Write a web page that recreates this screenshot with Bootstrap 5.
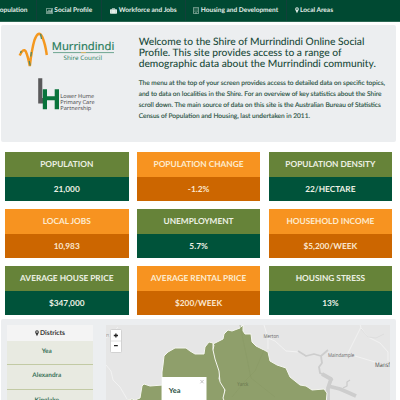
<!DOCTYPE html>
<html lang="en">
<head>
<meta charset="utf-8">
<meta name="viewport" content="width=device-width, initial-scale=1">
<title>Murrindindi Online Social Profile</title>
<link href="https://cdn.jsdelivr.net/npm/bootstrap@5.3.0/dist/css/bootstrap.min.css" rel="stylesheet">
<style>
html, body { width: 400px; height: 400px; overflow: hidden; }
body { font-family: Lato, sans-serif; background: #fff; color: #1f4e3d; font-size: 7px; line-height: 1.2; text-rendering: geometricPrecision; }
.topbar { height: 21.5px; background: #004932; border-bottom: 1px solid #2b6753; color: #e4eee9; font-weight: 700; font-size: 6.55px; white-space: nowrap; }
.topbar .cell { height: 21px; border-right: 1px solid #123f3a; gap: 1.5px; color: inherit; text-decoration: none; flex: none; }
.topbar .cell:last-child { border: 0; }
.panel { background: #eceef0; border-radius: 2px; margin-left: 1px; width: 395px; }
.intro { height: 117px; margin-top: 3.5px; }
.logos { width: 137.7px; flex: none; }
.headline { font-size: 10.22px; line-height: 11.15px; margin: 12.1px 0 0; color: #1a4b3a; font-weight: 500; white-space: nowrap; }
.copy { font-size: 6.55px; line-height: 11.1px; margin: 7px 0 0; white-space: nowrap; -webkit-text-stroke: .12px #1f4e3d; }
.tiles { display: grid; grid-template-columns: repeat(3, 123.5px); column-gap: 8.3px; row-gap: 8px; margin: 10px 0 0 5px; }
.tile { height: 49px; font-size: 8.3px; font-weight: 700; color: #edf1e4; text-align: center; line-height: 24.5px; white-space: nowrap; }
.tile div { height: 24.5px; }
.tile.leaf .top { background: #668339; }
.tile.leaf .val { background: #00533a; }
.tile.sun .top { background: #f79320; color: #fdebcf; }
.tile.sun .val { background: #cc6600; color: #fbe6cf; }
.districts { height: 90px; margin-top: 4px; padding: 6px 0 0 6px; }
.side { width: 86px; margin-right: 13px; font-weight: 700; flex: none; }
.side .head { height: 16px; background: #f4f4f4; color: #333; font-size: 6.7px; gap: 1px; }
.side .place { display: block; height: 24.3px; line-height: 22px; background: #e8eae1; border-bottom: 1.3px solid #c2caa4; text-align: center; padding-right: 6.5px; color: #397158; text-decoration: none; font-size: 6.4px; }
svg { display: block; flex: none; }
</style>
<script src="https://cdn.jsdelivr.net/npm/bootstrap@5.3.0/dist/js/bootstrap.bundle.min.js"></script>
</head>
<body>
<nav class="topbar d-flex overflow-hidden">
  <a class="cell d-flex align-items-center justify-content-end" style="width:37px;padding-right:8.5px">Population</a>
  <a class="cell d-flex align-items-center justify-content-center" style="width:65px">
    <svg width="7" height="6" viewBox="0 0 7 6"><path d="M.4.4H6.6V5.6H.4Z" fill="none" stroke="#c5d8cf" stroke-width=".6"/><path d="M1.8 4.8V3.2M3 4.8V1.8M4.2 4.8V2.6M5.4 4.8V1.3" stroke="#e4eee9" stroke-width=".8"/></svg>Social Profile</a>
  <a class="cell d-flex align-items-center justify-content-center" style="width:84px">
    <svg width="7" height="6" viewBox="0 0 7 6"><rect y="1.2" width="7" height="4.6" rx=".7" fill="#e4eee9"/><path d="M2.4 1.4V.4H4.6V1.4" fill="none" stroke="#e4eee9" stroke-width=".7"/><path d="M1.3 1.2V5.8M5.7 1.2V5.8" stroke="#8fb0a2" stroke-width=".3"/></svg>Workforce and Jobs</a>
  <a class="cell d-flex align-items-center justify-content-center" style="width:100.5px">
    <svg width="6" height="7" viewBox="0 0 6 7"><path d="M.5.4H5.5V6.6H.5Z" fill="none" stroke="#b9d0c5" stroke-width=".6"/><path d="M1.5 1.8H4.6M1.5 3.2H4.6M1.5 4.6H4.6" stroke="#b9d0c5" stroke-width=".7" stroke-dasharray=".7 .5"/><path d="M2.5 5.2H3.5V6.6H2.5Z" fill="#b9d0c5"/></svg>Housing and Development</a>
  <a class="cell d-flex align-items-center" style="padding-left:8px">
    <svg width="4" height="7" viewBox="0 0 4 7"><path fill-rule="evenodd" d="M2 .3A1.8 1.8 0 0 1 3.8 2.1C3.8 3.4 2.8 4.4 2 6.2C1.2 4.4.2 3.4.2 2.1A1.8 1.8 0 0 1 2 .3M2 1.3A.8.8 0 1 0 2 2.9A.8.8 0 1 0 2 1.3" fill="#e4eee9"/></svg>Local Areas</a>
</nav>

<section class="panel intro d-flex">
  <div class="logos">
    <svg width="130" height="94" viewBox="1 25 130 94">
      <path d="M19.7 55.5Q23.3 47.5 25.8 51.5Q28 56.5 29.8 66Q31.8 49 34.5 40Q38.5 29.5 42.3 37Q45.3 44 46.8 55" fill="none" stroke="#f4981f" stroke-width="2.5"/>
      <path d="M31.4 52L30.8 56.5M40.6 33.8L41.5 39M21.3 51L20.5 53M29.2 61L30.2 65.5" stroke="#4f8a67" stroke-width="1.3" fill="none"/>
      <g font-family="Open Sans, sans-serif" fill="#257a59">
        <text x="51.8" y="49.6" font-size="10.8" stroke="#257a59" stroke-width=".2" textLength="62.5" lengthAdjust="spacingAndGlyphs">Murrindindi</text>
        <text x="63.5" y="59.8" font-size="6.1" textLength="38.5" lengthAdjust="spacingAndGlyphs">Shire Council</text>
      </g>
      <path d="M53 52.6H114" stroke="#4c9277" stroke-width=".8"/><path d="M81 52.6H86" stroke="#e6b760" stroke-width=".9"/>
      <path d="M38.2 78.3H42.3V98H45V102.3L42.8 103.4H38.2Z" fill="#59595b"/>
      <path d="M42.8 89.3H47V96.3H54.7V89.3H59V109.3H54.7V100.3H47V109.3H42.8Z" fill="#08733b"/>
      <g font-family="Open Sans, sans-serif" fill="#444" font-size="5.5">
        <text x="60.3" y="98.4" textLength="34" lengthAdjust="spacingAndGlyphs">Lower Hume</text>
        <text x="60.3" y="104.3" textLength="34.5" lengthAdjust="spacingAndGlyphs">Primary Care</text>
        <text x="60.3" y="110.2" textLength="31" lengthAdjust="spacingAndGlyphs">Partnership</text>
      </g>
    </svg>
  </div>
  <div>
    <h1 class="headline">Welcome to the Shire of Murrindindi Online Social<br>Profile. This site provides access to a range of<br>demographic data about the Murrindindi community.</h1>
    <p class="copy">The menu at the top of your screen provides access to detailed data on specific topics,<br>and to data on localities in the Shire. For an overview of key statistics about the Shire<br>scroll down. The main source of data on this site is the Australian Bureau of Statistics<br>Census of Population and Housing, last undertaken in 2011.</p>
  </div>
</section>

<section class="tiles">
  <div class="tile leaf"><div class="top">POPULATION</div><div class="val">21,000</div></div>
  <div class="tile sun"><div class="top">POPULATION CHANGE</div><div class="val">-1.2%</div></div>
  <div class="tile leaf"><div class="top">POPULATION DENSITY</div><div class="val">22/HECTARE</div></div>
  <div class="tile sun"><div class="top">LOCAL JOBS</div><div class="val">10,983</div></div>
  <div class="tile leaf"><div class="top">UNEMPLOYMENT</div><div class="val">5.7%</div></div>
  <div class="tile sun"><div class="top">HOUSEHOLD INCOME</div><div class="val">$5,200/WEEK</div></div>
  <div class="tile leaf"><div class="top">AVERAGE HOUSE PRICE</div><div class="val">$347,000</div></div>
  <div class="tile sun"><div class="top">AVERAGE RENTAL PRICE</div><div class="val">$200/WEEK</div></div>
  <div class="tile leaf"><div class="top">HOUSING STRESS</div><div class="val">13%</div></div>
</section>

<section class="panel districts d-flex">
  <div class="side">
    <div class="head d-flex align-items-center justify-content-center">
      <svg width="4" height="7" viewBox="0 0 4 7"><path fill-rule="evenodd" d="M2 .3A1.8 1.8 0 0 1 3.8 2.1C3.8 3.4 2.8 4.4 2 6.2C1.2 4.4.2 3.4.2 2.1A1.8 1.8 0 0 1 2 .3M2 1.3A.8.8 0 1 0 2 2.9A.8.8 0 1 0 2 1.3" fill="#333"/></svg>Districts</div>
    <a class="place">Yea</a><a class="place">Alexandra</a><a class="place">Kinglake</a>
  </div>
  <svg width="284" height="80" viewBox="106 325 284 80">
    <rect x="106" y="325" width="284" height="80" fill="#e6e6e6"/>
    <g fill="none" stroke="#f3f3f3" stroke-width=".9">
      <path d="M106 365L111 371L113 380L120 387L127 399M106 338L112 334L118 327"/>
      <path d="M264 325L268 338L268 349M268 338L275 341L286 351L299 352L305 356M348 353L361 327L360 325M361 328L368 337L380 343L388 352V361M355 356L375 362L390 366"/>
      <path d="M361 329L368 337L376 338L384 334" stroke="#ddd"/>
    </g>
    <g fill="none" stroke="#cdcdcd" stroke-linejoin="round">
      <path d="M298 351L306 356L314 354L321 356L328 350M321 356L322 363L319 367L320 373L326 376L333 380" stroke-width="1.8"/>
      <path d="M322 374L331 379L328 388L328 400M328 386L340 389L347 392L356 396" stroke-width="3.8"/>
      <path d="M343 388L347 386L347 382L350 380" stroke-width="1.3"/>
    </g>
    <g fill="#8f9f6b" stroke="#f5f6f0" stroke-width="1">
      <path d="M122 405L125 401L132 399L135 400L140 398L142 386L144 384L150 386L163 385L163 400V405Z"/>
      <path d="M162 405V372L163 365L164 356L168 352L175 348L186 348L190 351L195 354L204 354L205 347L209 342L213 343L213 349L216 359L220 371L219 379L225 388L224 398L226 405Z"/>
      <path d="M213 344L223 339L224 334L228 330L232 331L240 328L243 325L243 331L245 334L251 334L252 342L256 346L268 352L270 361L277 365L286 368L290 377L300 385L306 386L312 390L324 389L327 393L326 405H226L223 398L225 390L220 382L219 371L215 359L213 350L214 345Z"/>
    </g>
    <path d="M264 350L255 371L246 380L232 397M240 325L251 378L275 397" fill="none" stroke="#889865" stroke-width=".5"/>
    <g font-family="Open Sans, sans-serif" font-size="5.4" fill="#666">
      <text x="263.4" y="338" textLength="15.5" lengthAdjust="spacingAndGlyphs">Merton</text>
      <text x="328" y="357.4" textLength="26.3" lengthAdjust="spacingAndGlyphs">Maindample</text>
      <text x="375" y="367.3" font-size="6.2" fill="#444" textLength="15" lengthAdjust="spacingAndGlyphs">Mansf</text>
      <text x="237.3" y="385.8" fill="#65734b" textLength="11" lengthAdjust="spacingAndGlyphs">Yarck</text>
      <text x="106" y="337" fill="#999">n</text>
    </g>
    <rect x="110.5" y="329.5" width="11" height="23" rx="1" fill="#fff" stroke="#c9c9c9" stroke-width=".8"/>
    <path d="M111 341H121" stroke="#ccc" stroke-width=".6"/>
    <path d="M113.8 335.5H118M115.9 333.4V337.6M114 345.7H117.8" stroke="#222" stroke-width="1.3"/>
    <rect x="162" y="377" width="44.5" height="30" fill="#fff"/>
    <path d="M200.4 380L203.6 383.3M203.6 380L200.4 383.3" stroke="#bbb" stroke-width=".9"/>
    <text x="168.8" y="392.7" font-family="Lato, sans-serif" font-weight="700" font-size="7" fill="#1f4e3d" textLength="11.7" lengthAdjust="spacingAndGlyphs">Yea</text>
  </svg>
</section>
</body>
</html>
